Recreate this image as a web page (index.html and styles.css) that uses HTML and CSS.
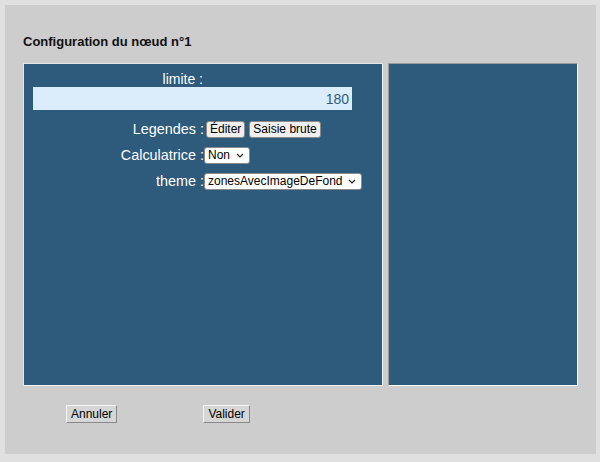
FILE: index.html
```html
<!DOCTYPE html>
<html lang="fr">
<head>
<meta charset="utf-8">
<title>Configuration du nœud n°1</title>
<link rel="stylesheet" href="styles.css">
</head>
<body>
<div class="dialog">
  <h1 class="title">Configuration du nœud n°1</h1>
  <div class="panels">
    <div class="panel panel-main">
      <div class="top-label">limite :</div>
      <input class="limit-input" type="text" value="180">
      <div class="fields">
        <div class="field-label">Legendes :</div>
        <div class="field-ctrl buttons">
          <button class="small-btn" type="button">Éditer</button>
          <button class="small-btn" type="button">Saisie brute</button>
        </div>
        <div class="field-label">Calculatrice :</div>
        <div class="field-ctrl">
          <span class="sel-wrap">
            <select class="sel sel-non"><option>Non</option></select>
            <svg class="chev" width="8" height="5" viewBox="0 0 8 5"><path d="M1 1 L4 4 L7 1" fill="none" stroke="#222" stroke-width="1.2"/></svg>
          </span>
        </div>
        <div class="field-label">theme :</div>
        <div class="field-ctrl">
          <span class="sel-wrap">
            <select class="sel sel-theme"><option>zonesAvecImageDeFond</option></select>
            <svg class="chev" width="8" height="5" viewBox="0 0 8 5"><path d="M1 1 L4 4 L7 1" fill="none" stroke="#222" stroke-width="1.2"/></svg>
          </span>
        </div>
      </div>
    </div>
    <div class="panel panel-side"></div>
  </div>
  <div class="actions">
    <button class="win-btn" type="button">Annuler</button>
    <button class="win-btn" type="button">Valider</button>
  </div>
</div>
</body>
</html>
```

FILE: styles.css
```css
html, body {
  margin: 0;
  padding: 0;
}
body {
  background: #e0e0e0;
  font-family: "Liberation Sans", Arial, sans-serif;
  width: 600px;
  height: 462px;
  overflow: hidden;
}
.dialog {
  box-sizing: border-box;
  margin: 5px 0 0 5px;
  width: 591px;
  height: 449px;
  background: #cdcdcd;
  padding: 28px 0 0 18px;
}
.title {
  margin: 0;
  font-size: 13px;
  font-weight: bold;
  line-height: 18px;
  color: #111;
}
.panels {
  display: flex;
  gap: 5px;
  margin-top: 12px;
}
.panel {
  box-sizing: border-box;
  height: 323px;
  background: #2e5a7c;
}
.panel-main {
  width: 360px;
  border: 1px solid #f2f2f2;
  border-top-color: #e4e4e4;
  border-left-color: #e4e4e4;
  padding: 8px 0 0 9px;
}
.panel-side {
  width: 190px;
  border: 1px solid #fff;
  border-top-color: #9a9a9a;
  border-left-color: #9a9a9a;
}
.top-label {
  width: 170px;
  text-align: right;
  color: #fff;
  font-size: 14px;
  line-height: 15px;
}
.limit-input {
  display: block;
  box-sizing: border-box;
  width: 319px;
  height: 23px;
  margin: 0;
  border: none;
  background: #dbedfa;
  color: #2f5b80;
  text-align: right;
  font-family: "Liberation Sans", Arial, sans-serif;
  font-size: 14px;
  padding: 0 3px 0 2px;
  outline: none;
}
.fields {
  display: grid;
  grid-template-columns: 171px auto;
  align-items: center;
  row-gap: 9px;
  margin-top: 11px;
}
.field-label {
  color: #fff;
  font-size: 14.4px;
  line-height: 17px;
  text-align: right;
  white-space: nowrap;
}
.field-ctrl {
  display: flex;
  align-items: center;
  height: 17px;
}
.buttons {
  gap: 4px;
  padding-left: 2px;
}
.small-btn {
  box-sizing: border-box;
  height: 17px;
  margin: 0;
  padding: 0 3px;
  font-family: "Liberation Sans", Arial, sans-serif;
  font-size: 12px;
  line-height: 13px;
  color: #000;
  background: #efefef;
  border: 1px solid #8a8a8a;
  border-radius: 3px;
}
.sel-wrap {
  position: relative;
  display: inline-flex;
}
.sel {
  -webkit-appearance: none;
  appearance: none;
  box-sizing: border-box;
  height: 17px;
  margin: 0;
  padding: 0 0 0 3px;
  font-family: "Liberation Sans", Arial, sans-serif;
  font-size: 12px;
  line-height: 15px;
  color: #000;
  background: #fff;
  border: 1px solid #8a8a8a;
  border-radius: 3px;
}
.sel-non {
  width: 46px;
}
.sel-theme {
  width: 158px;
}
.chev {
  position: absolute;
  right: 6px;
  top: 6px;
  pointer-events: none;
}
.actions {
  display: flex;
  gap: 86px;
  margin-top: 19px;
  padding-left: 43px;
}
.win-btn {
  box-sizing: border-box;
  height: 18px;
  margin: 0;
  padding: 0 4px;
  font-family: "Liberation Sans", Arial, sans-serif;
  font-size: 12px;
  line-height: 14px;
  color: #000;
  background: #d6d6d6;
  border: 1px solid #888;
  border-top-color: #f4f4f4;
  border-left-color: #f4f4f4;
  border-radius: 0;
}
```
